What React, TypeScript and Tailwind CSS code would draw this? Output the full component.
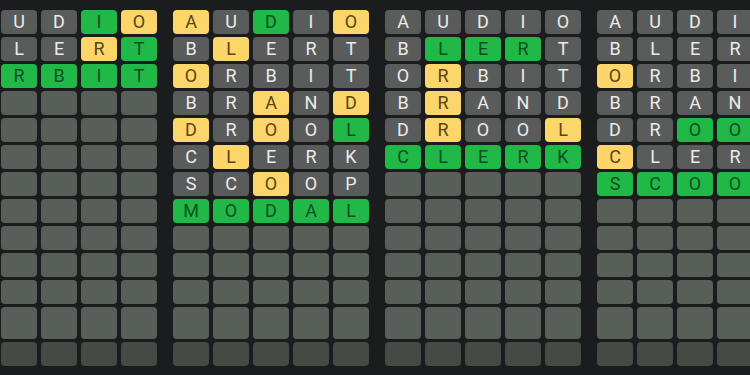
type Tile = "g" | "y" | "x";

type Board = { words: string[]; marks: string[] };

const boards: Board[] = [
  {
    words: ["AUDIO", "BLERT", "ORBIT"],
    marks: ["xxxgy", "xxxyg", "ggggg"],
  },
  {
    words: ["AUDIO", "BLERT", "ORBIT", "BRAND", "DROOL", "CLERK", "SCOOP", "MODAL"],
    marks: ["yxgxy", "xyxxx", "yxxxx", "xxyxy", "yxyxg", "xyxxx", "xxyxx", "ggggg"],
  },
  {
    words: ["AUDIO", "BLERT", "ORBIT", "BRAND", "DROOL", "CLERK"],
    marks: ["xxxxx", "xgggx", "xyxxx", "xyxxx", "xyxxy", "ggggg"],
  },
  {
    words: ["AUDIO", "BLERT", "ORBIT", "BRAND", "DROOL", "CLERK", "SCOOP"],
    marks: ["xxxxx", "xxxxx", "yxxxx", "xxxxx", "xxggx", "yxxxx", "ggggg"],
  },
];

const ROWS = 13;

const tileClass: Record<Tile, string> = {
  g: "bg-[#20b948] text-[#0f4f22]",
  y: "bg-[#fdd66b] text-[#5a4512]",
  x: "bg-[#5a5c5b] text-[#ebebeb]",
};

function Cell({ letter, mark, row }: { letter?: string; mark?: Tile; row: number }) {
  const empty = !letter;
  const height = row === 11 ? "h-[32px]" : "h-[24px]";
  const color = empty
    ? row === 12
      ? "bg-[#454a45]"
      : "bg-[#585e58]"
    : tileClass[mark ?? "x"];
  return (
    <div
      className={`flex w-[36px] ${height} items-center justify-center rounded-[4px] text-[18px] leading-none ${color}`}
    >
      {letter}
    </div>
  );
}

function BoardGrid({ board }: { board: Board }) {
  return (
    <div className="grid shrink-0 grid-cols-[repeat(5,36px)] gap-x-[4px] gap-y-[3px]">
      {Array.from({ length: ROWS }).map((_, r) =>
        Array.from({ length: 5 }).map((_, c) => (
          <Cell
            key={`${r}-${c}`}
            row={r}
            letter={board.words[r]?.[c]}
            mark={board.marks[r]?.[c] as Tile | undefined}
          />
        ))
      )}
    </div>
  );
}

export default function App() {
  return (
    <div
      className="h-[375px] w-[750px] overflow-hidden bg-[#1b1c1d]"
      style={{ fontFamily: "Roboto, 'Liberation Sans', sans-serif" }}
    >
      <div className="ml-[-39px] flex gap-[16px] pt-[10px]">
        {boards.map((b, i) => (
          <BoardGrid key={i} board={b} />
        ))}
      </div>
    </div>
  );
}
